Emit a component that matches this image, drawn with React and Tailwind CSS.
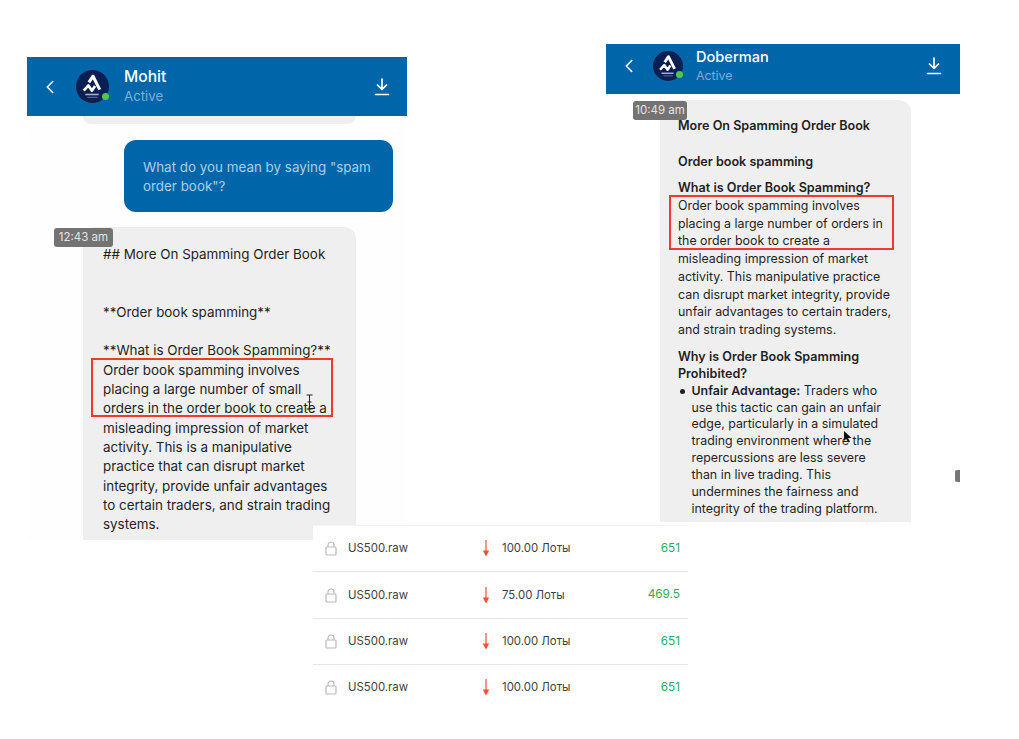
import { ChevronLeft } from "lucide-react";

const font = { fontFamily: "Inter, 'Noto Sans', sans-serif" };

const Avatar = ({ size }) => (
  <div className="relative shrink-0" style={{ width: size, height: size }}>
    <svg viewBox="0 0 32 32" className="w-full h-full">
      <circle cx="16" cy="16" r="16" fill="#0a1f52" />
      <path d="M12.500 12l4-6 6.500 13" fill="none" stroke="#fff" strokeWidth="3" strokeLinejoin="round" />
      <path d="M7.500 20l4.500-5 3.500 5 3-4.500" fill="none" stroke="#fff" strokeWidth="2.600" strokeLinejoin="round" />
      <rect x="9" y="23" width="13" height="1.500" fill="#aab4c8" />
      <rect x="11" y="26" width="10" height="1" fill="#65728f" />
    </svg>
    <div className="absolute right-0 bottom-[3px] w-[7px] h-[7px] rounded-full bg-[#4fc84a]" />
  </div>
);

const DownloadIcon = () => (
  <svg width="16" height="18" viewBox="0 0 16 18" fill="none" stroke="#fff" strokeWidth="1.700" strokeLinecap="round" strokeLinejoin="round">
    <path d="M8 1v10M3.500 7L8 11.500 12.500 7M1.500 16.500h13" />
  </svg>
);

const Header = ({ name, titleClass, activeClass, avatar, className }) => (
  <div className={`flex items-center bg-[#0165a9] shrink-0 ${className}`}>
    <ChevronLeft size={22} color="#fff" strokeWidth={1.700} className="shrink-0" />
    <Avatar size={avatar} />
    <div className="flex-1 flex flex-col">
      <div className={`text-white font-medium ${titleClass}`}>{name}</div>
      <div className={`text-[#79b1d6] ${activeClass}`}>Active</div>
    </div>
    <DownloadIcon />
  </div>
);

const TimeBadge = ({ children, className }) => (
  <div className={`absolute bg-[#737373] text-[#e4e4e4] rounded-[3px] text-[11.500px] h-[19px] flex items-center justify-center ${className}`}>
    {children}
  </div>
);

const leftLines = [
  "Order book spamming involves",
  "placing a large number of small",
  "orders in the order book to create a",
  "misleading impression of market",
  "activity. This is a manipulative",
  "practice that can disrupt market",
  "integrity, provide unfair advantages",
  "to certain traders, and strain trading",
  "systems.",
];

const LeftChat = () => (
  <div className="absolute left-[27px] top-[57px] w-[380px] h-[483px] flex flex-col overflow-hidden bg-[#fefefe]">
    <Header name="Mohit" avatar={33} titleClass="text-[15.600px] leading-[20px]" activeClass="text-[13.300px] leading-[19px]" className="h-[59px] pl-[12px] pr-[17px] gap-[15px]" />
    <div className="ml-[56px] w-[273px] h-[8px] bg-[#efefef] rounded-b-[12px] shrink-0" />
    <div className="ml-[97px] mt-[16px] w-[269px] h-[72px] bg-[#0165a9] rounded-[12px] px-[19px] pt-[18px] text-[13.400px] leading-[19.400px] text-[#a9d0ea] shrink-0">
      <div className="whitespace-nowrap">What do you mean by saying "spam</div>
      <div className="whitespace-nowrap">order book"?</div>
    </div>
    <div className="ml-[56px] mt-[15px] w-[273px] flex-1 bg-[#efefef] rounded-t-[12px] pl-[20px] pt-[18px] text-[13.400px] leading-[19.300px] text-[#1f1f1f] whitespace-nowrap">
      <div>## More On Spamming Order Book</div>
      <div className="mt-[38.600px]">**Order book spamming**</div>
      <div className="mt-[19.300px]">**What is Order Book Spamming?**</div>
      {leftLines.map((line) => (
        <div key={line}>{line}</div>
      ))}
    </div>
    <TimeBadge className="left-[27px] top-[171px] w-[59px]">12:43 am</TimeBadge>
    <div className="absolute left-[64px] top-[301px] w-[242px] h-[59px] border-2 border-[#f23a2c]" />
    <svg className="absolute left-[278px] top-[337px]" width="9" height="16" viewBox="0 0 9 16" fill="none" stroke="#222" strokeWidth="1">
      <path d="M1.500 1h6M4.500 1v14M1.500 15h6M2.500 8h4" />
    </svg>
  </div>
);

const rightTop = [
  "Order book spamming involves",
  "placing a large number of orders in",
  "the order book to create a",
  "misleading impression of market",
  "activity. This manipulative practice",
  "can disrupt market integrity, provide",
  "unfair advantages to certain traders,",
  "and strain trading systems.",
];

const bulletLines = [
  "use this tactic can gain an unfair",
  "edge, particularly in a simulated",
  "trading environment where the",
  "repercussions are less severe",
  "than in live trading. This",
  "undermines the fairness and",
  "integrity of the trading platform.",
];

const RightChat = () => (
  <div className="absolute left-[606px] top-[44px] w-[354px] h-[478px] flex flex-col overflow-hidden">
    <Header name="Doberman" avatar={30} titleClass="text-[14.600px] leading-[19px]" activeClass="text-[12.300px] leading-[17px]" className="h-[50px] pl-[12px] pr-[18px] pb-[6px] gap-[13px]" />
    <div className="ml-[54px] mt-[6px] w-[251px] flex-1 bg-[#efefef] rounded-t-[12px] pl-[18px] pt-[17px] text-[12.400px] text-[#1f1f1f] whitespace-nowrap">
      <div className="font-semibold text-[12.600px] leading-[18px]">More On Spamming Order Book</div>
      <div className="font-semibold text-[12.600px] leading-[18px] mt-[18px]">Order book spamming</div>
      <div className="font-semibold text-[12.600px] leading-[18px] mt-[8px]">What is Order Book Spamming?</div>
      <div className="leading-[17.700px]">
        {rightTop.map((line) => (
          <div key={line}>{line}</div>
        ))}
      </div>
      <div className="font-semibold text-[12.600px] leading-[17.500px] mt-[9px]">Why is Order Book Spamming</div>
      <div className="font-semibold text-[12.600px] leading-[17.500px]">Prohibited?</div>
      <div className="leading-[16.900px] pl-[13.500px] relative">
        <div className="absolute left-[2px] top-[6px] w-[5px] h-[5px] rounded-full bg-[#1f1f1f]" />
        <div>
          <span className="font-semibold">Unfair Advantage:</span> Traders who
        </div>
        {bulletLines.map((line) => (
          <div key={line}>{line}</div>
        ))}
      </div>
    </div>
    <TimeBadge className="left-[27px] top-[57px] w-[54px]">10:49 am</TimeBadge>
    <div className="absolute left-[63px] top-[151px] w-[225px] h-[55px] border-2 border-[#f23a2c]" />
    <svg className="absolute left-[237px] top-[386px]" width="10" height="14" viewBox="0 0 10 14">
      <path d="M1 1v10l2.500-2.500 2 4 1.500-.8-2-3.800h3.500z" fill="#111" />
    </svg>
    <div className="absolute left-[349px] top-[426px] w-[5px] h-[12px] rounded-l-[2px] bg-[#777]" />
  </div>
);

const trades = [
  { lots: "100.00 Лоты", value: "651" },
  { lots: "75.00 Лоты", value: "469.5" },
  { lots: "100.00 Лоты", value: "651" },
  { lots: "100.00 Лоты", value: "651" },
];

const LockIcon = () => (
  <svg width="12" height="15" viewBox="0 0 12 15" fill="none" stroke="#b9b9b9" strokeWidth="1.200">
    <rect x="1" y="6" width="10" height="8" rx="1" />
    <path d="M3 6V4a3 3 0 0 1 6 0v2" />
  </svg>
);

const DownArrow = () => (
  <svg width="8" height="17" viewBox="0 0 8 17">
    <path d="M4 0v12" stroke="#f4502f" strokeWidth="1.200" />
    <path d="M.8 10.500h6.400L4 16.500z" fill="#f4502f" />
  </svg>
);

const TradeTable = () => (
  <div className="absolute left-[313px] top-[525px] w-[375px] bg-white">
    {trades.map((t, i) => (
      <div
        key={i}
        className={`h-[46.400px] flex items-center border-t pl-[12px] pr-[8px] text-[11.400px] text-[#3f3f3f] ${i === 0 ? "border-[#f4f4f4]" : "border-[#e6e6e6]"}`}
      >
        <LockIcon />
        <div className="ml-[11px] w-[134px]">US500.raw</div>
        <DownArrow />
        <div className="ml-[12px] flex-1">{t.lots}</div>
        <div className="text-[#30a860] text-[11.800px]">{t.value}</div>
      </div>
    ))}
  </div>
);

export default function App() {
  return (
    <div className="relative w-[1019px] h-[739px] bg-white overflow-hidden" style={font}>
      <LeftChat />
      <RightChat />
      <TradeTable />
    </div>
  );
}
